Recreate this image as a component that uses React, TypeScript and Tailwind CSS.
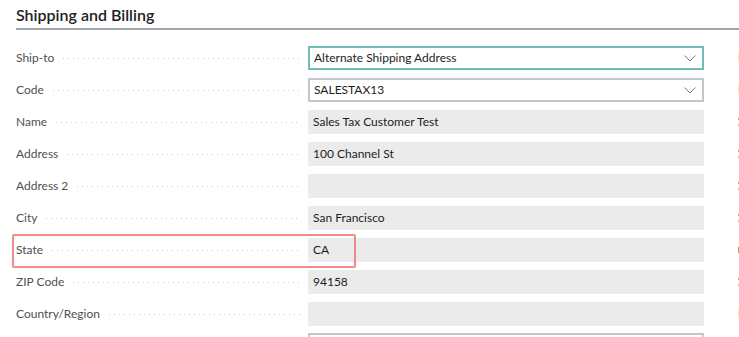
import React from 'react';

type Row = {
    label: string;
    value: string;
    kind: 'select' | 'readonly';
    focused?: boolean;
    edge: 'bar' | 'letter' | 'dot';
};

const rows: Row[] = [
    { label: 'Ship-to', value: 'Alternate Shipping Address', kind: 'select', focused: true, edge: 'bar' },
    { label: 'Code', value: 'SALESTAX13', kind: 'select', edge: 'bar' },
    { label: 'Name', value: 'Sales Tax Customer Test', kind: 'readonly', edge: 'letter' },
    { label: 'Address', value: '100 Channel St', kind: 'readonly', edge: 'letter' },
    { label: 'Address 2', value: '', kind: 'readonly', edge: 'letter' },
    { label: 'City', value: 'San Francisco', kind: 'readonly', edge: 'letter' },
    { label: 'State', value: 'CA', kind: 'readonly', edge: 'dot' },
    { label: 'ZIP Code', value: '94158', kind: 'readonly', edge: 'letter' },
    { label: 'Country/Region', value: '', kind: 'readonly', edge: 'bar' },
];

const Chevron: React.FC = () => (
    <svg width="12" height="7" viewBox="0 0 12 7" fill="none" className="shrink-0">
        <path d="M0.5 0.5 L6 6 L11.5 0.5" stroke="#7a7a7a" strokeWidth="1" />
    </svg>
);

const EdgeMark: React.FC<{ kind: Row['edge'] }> = ({ kind }) => {
    if (kind === 'bar') return <div className="w-px h-2 bg-[#fde4a8]" />;
    if (kind === 'dot') return <div className="w-px h-1.5 bg-[#d9914a]" />;
    return (
        <div className="flex flex-col gap-[4px]">
            <div className="w-px h-[2px] bg-[#e0a060]" />
            <div className="w-px h-[2px] bg-[#ecc090]" />
        </div>
    );
};

const FieldRow: React.FC<{ row: Row }> = ({ row }) => {
    const field =
        row.kind === 'select' ? (
            <div
                className={`w-[396px] h-[24px] flex items-center justify-between pl-[4px] pr-[6px] bg-white ${
                    row.focused ? 'border-2 border-[#6dbdb6]' : 'border-2 border-[#c4c6c9]'
                }`}
            >
                <span className="text-[#1d1d1d] whitespace-nowrap">{row.value}</span>
                <Chevron />
            </div>
        ) : (
            <div className="w-[396px] h-[24px] flex items-center px-[5px] bg-[#ebebec]">
                <span className="text-[#1d1d1d] whitespace-nowrap">{row.value}</span>
            </div>
        );

    return (
        <div className="h-[32px] flex items-center">
            <div className="w-[292px] flex items-center pr-[8px]">
                <span className="text-[#505050] whitespace-nowrap">{row.label}</span>
                <div className="flex-1 ml-[9px] mt-[1px] h-px bg-[linear-gradient(to_right,#c9c9c9_1px,transparent_1px)] bg-[length:5px_1px]" />
            </div>
            {field}
            <div className="flex-1 flex justify-end">
                <EdgeMark kind={row.edge} />
            </div>
        </div>
    );
};

export default function App() {
    return (
        <div
            className="w-[739px] h-[337px] overflow-hidden bg-white text-[12px] leading-normal"
            style={{ fontFamily: 'Lato, "Open Sans", sans-serif' }}
        >
            <div className="pl-4 pt-[5px]">
                <h2 className="text-[16px] leading-[20px] font-semibold text-[#212121] pb-[3px] border-b-2 border-[#a3a6aa]">
                    Shipping and Billing
                </h2>
            </div>
            <div className="pl-4 pt-[12px] relative">
                {rows.map((row) => (
                    <FieldRow key={row.label} row={row} />
                ))}
                <div className="absolute left-[12px] top-[204px] w-[344px] h-[34px] border-2 border-[#ee8c8c] rounded-[2px] pointer-events-none" />
                <div className="ml-[292px] mt-[3px] w-[396px] h-[10px] border-2 border-b-0 border-[#c4c6c9]" />
            </div>
        </div>
    );
}
